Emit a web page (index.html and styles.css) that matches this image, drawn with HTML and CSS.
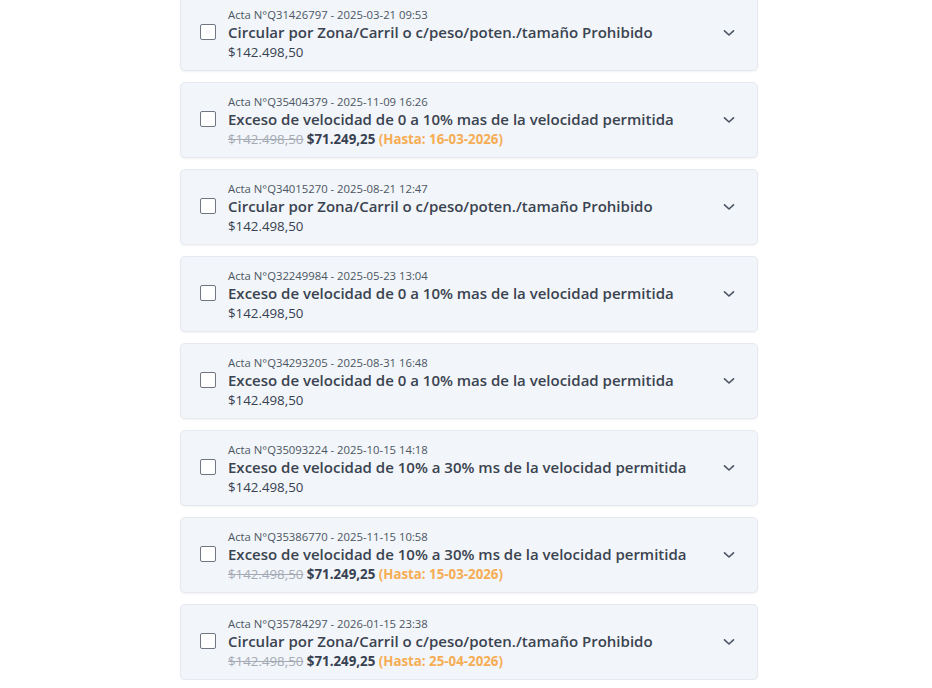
FILE: index.html
```html
<!DOCTYPE html>
<html lang="es">
<head>
<meta charset="utf-8">
<link rel="stylesheet" href="styles.css">
</head>
<body>
<div class="list">
  <div class="card">
    <span class="check"></span>
    <div class="info">
      <div class="meta">Acta N°Q31426797 - 2025-03-21 09:53</div>
      <div class="title">Circular por Zona/Carril o c/peso/poten./tamaño Prohibido</div>
      <div class="price">$142.498,50</div>
    </div>
    <svg class="chev" viewBox="0 0 12 8" width="12" height="8"><path d="M1.5 1.8 L6 6 L10.5 1.8" fill="none" stroke="currentColor" stroke-width="1.6" stroke-linecap="round" stroke-linejoin="round"/></svg>
  </div>
  <div class="card">
    <span class="check"></span>
    <div class="info">
      <div class="meta">Acta N°Q35404379 - 2025-11-09 16:26</div>
      <div class="title">Exceso de velocidad de 0 a 10% mas de la velocidad permitida</div>
      <div class="price"><s class="old">$142.498,50</s> <b class="new">$71.249,25</b> <span class="until">(Hasta: 16-03-2026)</span></div>
    </div>
    <svg class="chev" viewBox="0 0 12 8" width="12" height="8"><path d="M1.5 1.8 L6 6 L10.5 1.8" fill="none" stroke="currentColor" stroke-width="1.6" stroke-linecap="round" stroke-linejoin="round"/></svg>
  </div>
  <div class="card">
    <span class="check"></span>
    <div class="info">
      <div class="meta">Acta N°Q34015270 - 2025-08-21 12:47</div>
      <div class="title">Circular por Zona/Carril o c/peso/poten./tamaño Prohibido</div>
      <div class="price">$142.498,50</div>
    </div>
    <svg class="chev" viewBox="0 0 12 8" width="12" height="8"><path d="M1.5 1.8 L6 6 L10.5 1.8" fill="none" stroke="currentColor" stroke-width="1.6" stroke-linecap="round" stroke-linejoin="round"/></svg>
  </div>
  <div class="card">
    <span class="check"></span>
    <div class="info">
      <div class="meta">Acta N°Q32249984 - 2025-05-23 13:04</div>
      <div class="title">Exceso de velocidad de 0 a 10% mas de la velocidad permitida</div>
      <div class="price">$142.498,50</div>
    </div>
    <svg class="chev" viewBox="0 0 12 8" width="12" height="8"><path d="M1.5 1.8 L6 6 L10.5 1.8" fill="none" stroke="currentColor" stroke-width="1.6" stroke-linecap="round" stroke-linejoin="round"/></svg>
  </div>
  <div class="card">
    <span class="check"></span>
    <div class="info">
      <div class="meta">Acta N°Q34293205 - 2025-08-31 16:48</div>
      <div class="title">Exceso de velocidad de 0 a 10% mas de la velocidad permitida</div>
      <div class="price">$142.498,50</div>
    </div>
    <svg class="chev" viewBox="0 0 12 8" width="12" height="8"><path d="M1.5 1.8 L6 6 L10.5 1.8" fill="none" stroke="currentColor" stroke-width="1.6" stroke-linecap="round" stroke-linejoin="round"/></svg>
  </div>
  <div class="card">
    <span class="check"></span>
    <div class="info">
      <div class="meta">Acta N°Q35093224 - 2025-10-15 14:18</div>
      <div class="title">Exceso de velocidad de 10% a 30% ms de la velocidad permitida</div>
      <div class="price">$142.498,50</div>
    </div>
    <svg class="chev" viewBox="0 0 12 8" width="12" height="8"><path d="M1.5 1.8 L6 6 L10.5 1.8" fill="none" stroke="currentColor" stroke-width="1.6" stroke-linecap="round" stroke-linejoin="round"/></svg>
  </div>
  <div class="card">
    <span class="check"></span>
    <div class="info">
      <div class="meta">Acta N°Q35386770 - 2025-11-15 10:58</div>
      <div class="title">Exceso de velocidad de 10% a 30% ms de la velocidad permitida</div>
      <div class="price"><s class="old">$142.498,50</s> <b class="new">$71.249,25</b> <span class="until">(Hasta: 15-03-2026)</span></div>
    </div>
    <svg class="chev" viewBox="0 0 12 8" width="12" height="8"><path d="M1.5 1.8 L6 6 L10.5 1.8" fill="none" stroke="currentColor" stroke-width="1.6" stroke-linecap="round" stroke-linejoin="round"/></svg>
  </div>
  <div class="card">
    <span class="check"></span>
    <div class="info">
      <div class="meta">Acta N°Q35784297 - 2026-01-15 23:38</div>
      <div class="title">Circular por Zona/Carril o c/peso/poten./tamaño Prohibido</div>
      <div class="price"><s class="old">$142.498,50</s> <b class="new">$71.249,25</b> <span class="until">(Hasta: 25-04-2026)</span></div>
    </div>
    <svg class="chev" viewBox="0 0 12 8" width="12" height="8"><path d="M1.5 1.8 L6 6 L10.5 1.8" fill="none" stroke="currentColor" stroke-width="1.6" stroke-linecap="round" stroke-linejoin="round"/></svg>
  </div>
</div>
</body>
</html>
```
FILE: styles.css
```css
html, body {
  margin: 0;
  padding: 0;
  background: #ffffff;
}
body {
  font-family: "Open Sans", "Noto Sans", sans-serif;
  color: #374151;
  overflow: hidden;
}
.list {
  display: flex;
  flex-direction: column;
  gap: 11px;
  width: 578px;
  margin: -5px 0 0 180px;
}
.card {
  box-sizing: border-box;
  height: 76px;
  display: flex;
  align-items: center;
  gap: 12px;
  padding: 2px 22px 0 19px;
  background: #f2f5f9;
  border: 1px solid #e6eaf0;
  border-radius: 5px;
  box-shadow: 0 1px 2px rgba(15, 23, 42, 0.05);
}
.check {
  flex: none;
  width: 16px;
  height: 16px;
  box-sizing: border-box;
  border: 1.5px solid #707782;
  border-radius: 2px;
  background: #ffffff;
  margin-top: -4px;
}
.info {
  flex: 1;
  min-width: 0;
  display: flex;
  flex-direction: column;
}
.meta {
  font-size: 11.3px;
  line-height: 15px;
  color: #4b5563;
}
.title {
  font-size: 15px;
  line-height: 20px;
  font-weight: 600;
  color: #3a4350;
  white-space: nowrap;
}
.price {
  font-size: 13.3px;
  line-height: 20px;
  color: #374151;
}
.old {
  color: #a4abb5;
}
.new {
  font-weight: 700;
  color: #374151;
}
.until {
  font-weight: 700;
  color: #f6ad55;
}
.chev {
  flex: none;
  color: #4b5563;
  margin-top: -3px;
}
```
